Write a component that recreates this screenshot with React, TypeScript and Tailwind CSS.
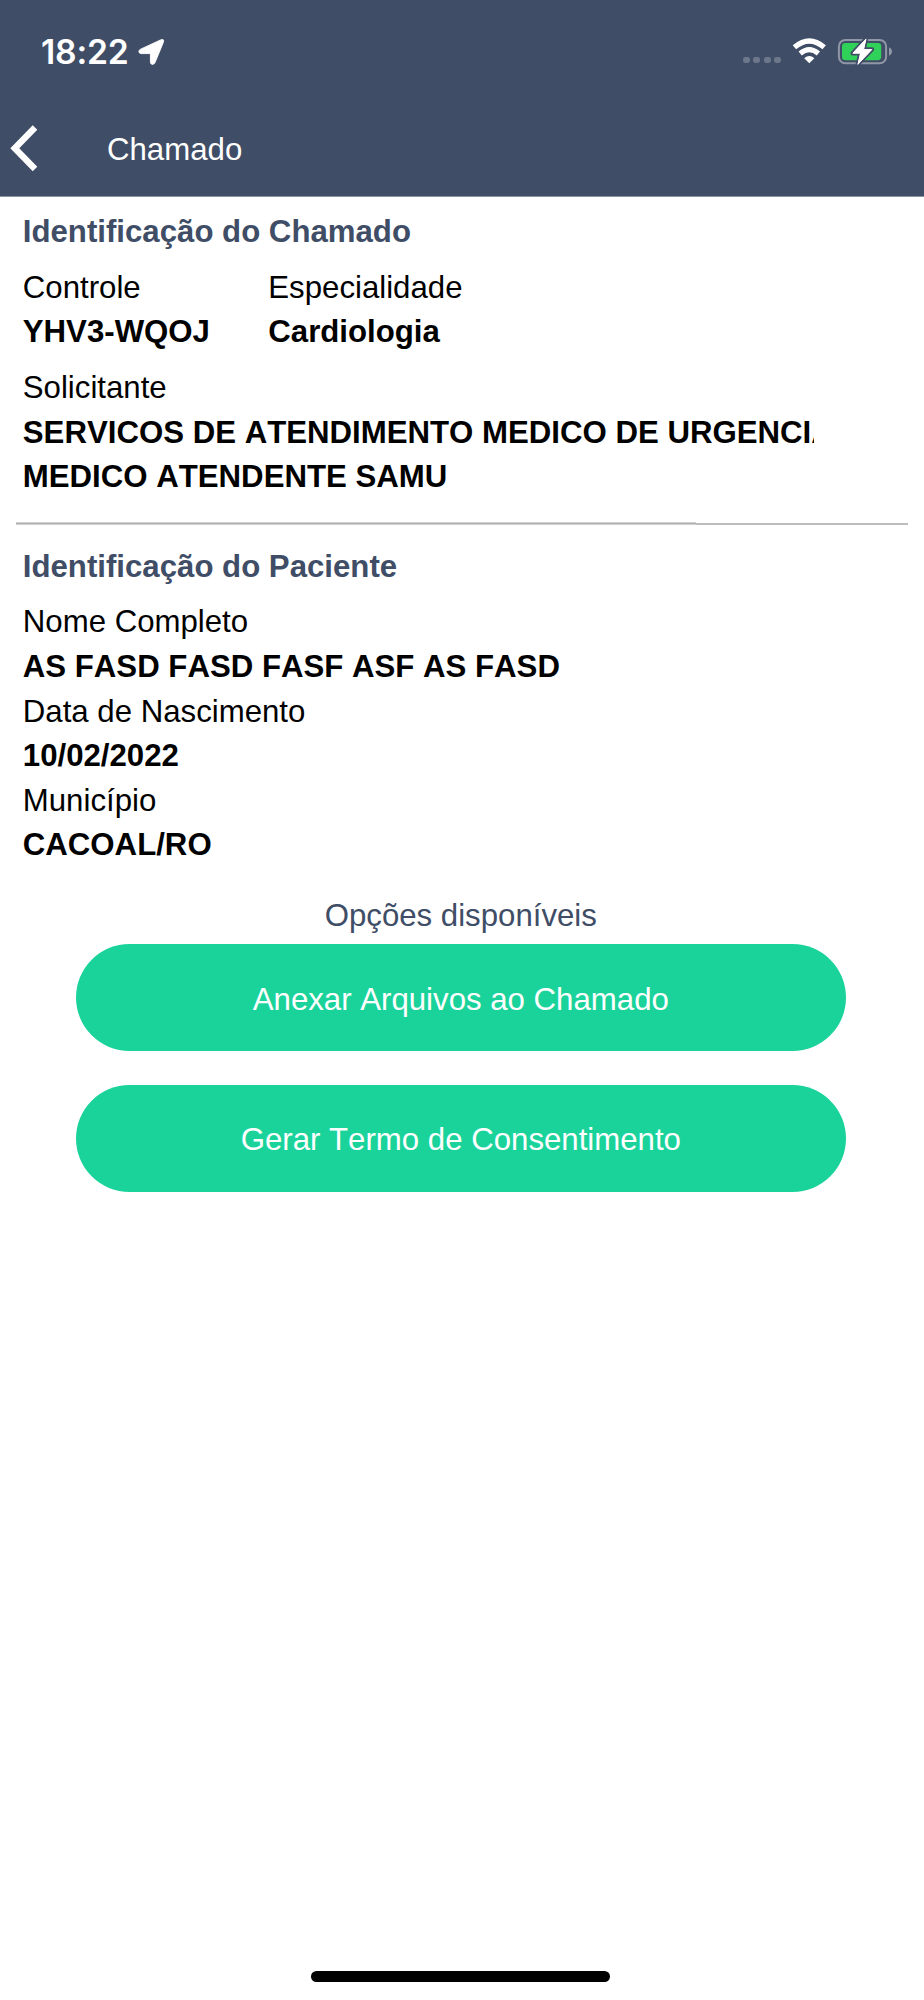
import type { ReactNode } from "react";

function StatusBar() {
  return (
    <div className="flex h-[104px] shrink-0 items-start">
      <span className="ml-[41px] mt-[32px] w-[92px] whitespace-nowrap font-['Inter'] text-[33.7px]/[40px] font-semibold tracking-[-0.2px] text-white">
        18:22
      </span>
      <svg className="ml-[3px] mt-[36px] h-8 w-8" viewBox="136 36 32 32" fill="#fff">
        <path
          d="M160.6 39.9Q164.6 38.4 163.3 42.4L155 62.6Q153.9 64.8 152.1 64.3Q150.5 64 150.4 62.2V53.6H141Q138.9 53.4 138.9 51.6Q138.8 50 140.6 49.2Z"
          stroke="#fff"
          strokeWidth="0.9"
          strokeLinejoin="round"
        />
      </svg>
      <div className="ml-[575px] mt-[56.5px] flex gap-[3.5px]">
        {[0, 1, 2, 3].map((i) => (
          <span key={i} className="h-[6.8px] w-[6.9px] rounded-[2.4px] bg-[#6d778b]" />
        ))}
      </div>
      <svg className="ml-[9px] mt-[36px] h-[30px] w-[38px]" viewBox="790 36 38 30" fill="none">
        <path d="M794.4 47.3Q809.3 34.6 824.2 47.3" stroke="#fff" strokeWidth="5.2" />
        <path d="M800.2 53.5Q809.3 45.8 818.4 53.5" stroke="#fff" strokeWidth="5" />
        <path d="M804.2 58.3Q809.3 53.6 814.4 58.3L809.3 63.3Z" fill="#fff" />
      </svg>
      <svg className="ml-[8px] mt-[36px] h-8 w-[60px]" viewBox="836 36 60 32" fill="none">
        <rect x="838.9" y="39.9" width="47.2" height="23.4" rx="6.5" stroke="#9097a6" strokeWidth="2" />
        <rect x="842" y="43" width="39.2" height="17.2" rx="3.4" fill="#30d158" />
        <path d="M889 47.2Q892 48.4 892 51.4T889 55.8Z" fill="#9097a6" />
        <path
          d="M866.3 38.4L852.4 53.4H860.2L857.4 65L872.2 49.3H863.9Z"
          fill="#fff"
          stroke="#404d66"
          strokeWidth="4"
          strokeLinejoin="round"
          paintOrder="stroke"
        />
        <path
          d="M865.9 39.2L852.9 53.1H860.6L858 64.2L871.7 49.6H863.5Z"
          fill="#fff"
          stroke="#fff"
          strokeWidth="1"
          strokeLinejoin="round"
        />
      </svg>
    </div>
  );
}

function Text({ bold, children, className = "" }: { bold?: boolean; children: ReactNode; className?: string }) {
  return (
    <p className={`h-[44.6px] whitespace-nowrap leading-[44.6px] ${bold ? "font-bold" : ""} ${className}`}>
      {children}
    </p>
  );
}

function ActionButton({ children }: { children: ReactNode }) {
  return (
    <button className="flex h-[107px] w-[770px] items-center justify-center rounded-full bg-[#1ad39b] pt-[5px] text-white">
      {children}
    </button>
  );
}

export default function App() {
  return (
    <div className="flex h-[2000px] w-[924px] flex-col overflow-hidden bg-white font-['Liberation_Sans',Arial,sans-serif] text-[31.2px] text-black [font-kerning:none]">
      <header className="flex h-[197px] shrink-0 flex-col border-b border-[#8a93a3] bg-[#404d66]">
        <StatusBar />
        <div className="flex items-start">
          <svg className="ml-[8px] mt-[19px] h-[50px] w-8" viewBox="8 123 32 50" fill="none">
            <path d="M35 127.6L14.8 148.2L35 168.9" stroke="#fff" strokeWidth="6.4" />
          </svg>
          <h1 className="ml-[67px] mt-[24px] leading-[44px] text-white">Chamado</h1>
        </div>
      </header>

      <main className="flex flex-col">
        <section className="flex flex-col pl-[22.8px] pt-[13.2px]">
          <Text bold className="text-[#404d66]">Identificação do Chamado</Text>
          <div className="mt-[11px] flex">
            <div className="w-[245.5px]">
              <Text>Controle</Text>
              <Text bold>YHV3-WQOJ</Text>
            </div>
            <div>
              <Text>Especialidade</Text>
              <Text bold>Cardiologia</Text>
            </div>
          </div>
          <div className="mt-[11px] w-[791.7px] overflow-hidden">
            <Text>Solicitante</Text>
            <Text bold>SERVICOS DE ATENDIMENTO MEDICO DE URGENCIA</Text>
            <Text bold>MEDICO ATENDENTE SAMU</Text>
          </div>
        </section>

        <div className="mx-4 mt-[21.8px] flex items-start">
          <div className="h-[3px] w-[680px] border-y border-[#d0d0d0] bg-[#b0b0b0]" />
          <div className="mt-px h-[2px] flex-1 bg-[#bdbdbd]" />
        </div>

        <section className="flex flex-col pl-[22.8px] pt-[20.2px]">
          <Text bold className="text-[#404d66]">Identificação do Paciente</Text>
          <div className="mt-[11px]">
            <Text>Nome Completo</Text>
            <Text bold>AS FASD FASD FASF ASF AS FASD</Text>
            <Text>Data de Nascimento</Text>
            <Text bold>10/02/2022</Text>
            <Text>Município</Text>
            <Text bold>CACOAL/RO</Text>
          </div>
        </section>

        <section className="flex flex-col items-center pr-[2.4px] pt-[26px]">
          <Text className="text-[#404d66]">Opções disponíveis</Text>
          <div className="mt-[5.7px] flex flex-col gap-[33.6px]">
            <ActionButton>Anexar Arquivos ao Chamado</ActionButton>
            <ActionButton>Gerar Termo de Consentimento</ActionButton>
          </div>
        </section>
      </main>

      <div className="mb-[18px] ml-[311px] mt-auto h-[11px] w-[299px] rounded-full bg-black" />
    </div>
  );
}
